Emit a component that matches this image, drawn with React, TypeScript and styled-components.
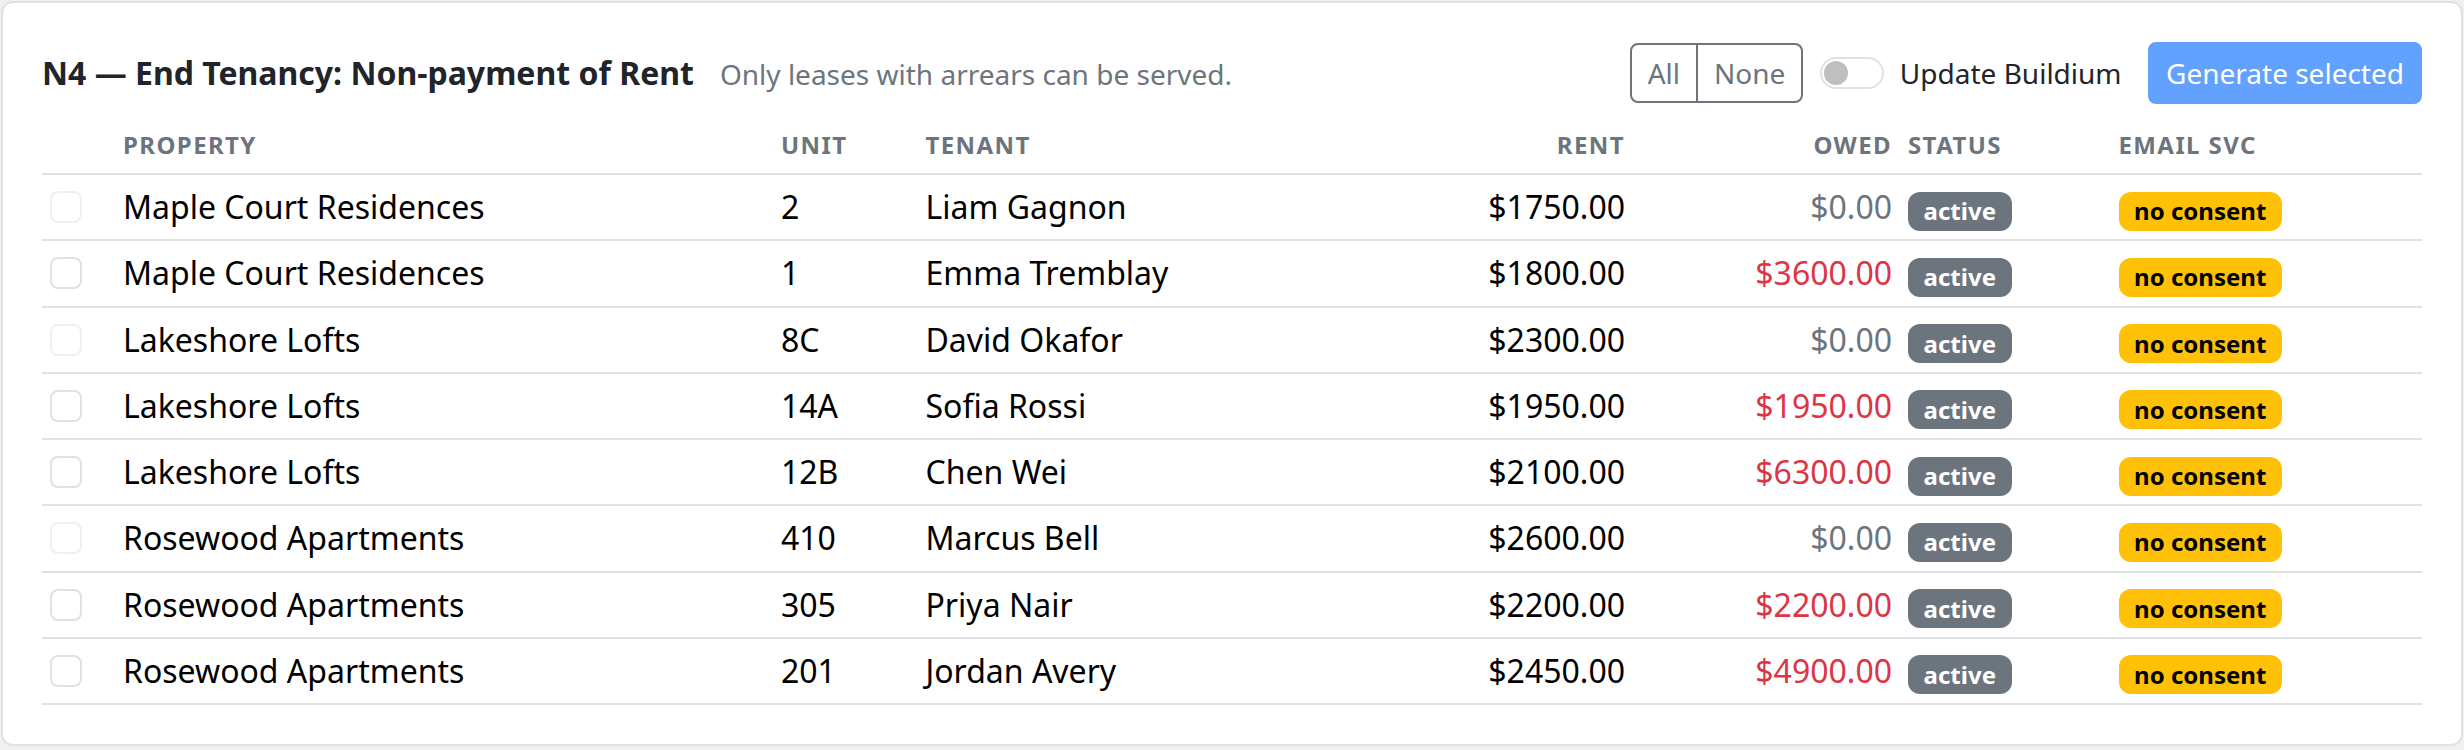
import React from "react";
import styled, { createGlobalStyle } from "styled-components";

const GlobalStyle = createGlobalStyle`
  html, body {
    margin: 0;
    padding: 0;
    background: #eef0f2;
    font-family: "Noto Sans", "Open Sans", sans-serif;
    color: #212529;
  }
  * { box-sizing: border-box; }
`;

const COLS = "73px 658px 144.5px 472.5px 243px 267px 210.5px 1fr";

const Page = styled.div`
  padding: 1px;
`;

const Card = styled.section`
  background: #ffffff;
  border: 2px solid #dee2e6;
  border-radius: 12px;
  padding: 39px;
`;

const Header = styled.div`
  display: flex;
  align-items: center;
  justify-content: space-between;
  height: 62px;
  margin-bottom: 17px;
`;

const TitleGroup = styled.div`
  display: flex;
  align-items: baseline;
`;

const Title = styled.h2`
  margin: 0;
  font-size: 32px;
  line-height: 48px;
  font-weight: 700;
  color: #212529;
`;

const Subtitle = styled.span`
  margin-left: 26px;
  font-size: 28px;
  line-height: 42px;
  color: #6c757d;
`;

const Controls = styled.div`
  display: flex;
  align-items: center;
`;

const BtnGroup = styled.div`
  display: flex;
  height: 60px;
  border: 2px solid #6c757d;
  border-radius: 8px;
  overflow: hidden;
`;

const GroupButton = styled.button<{ $divider?: boolean }>`
  font-family: inherit;
  font-size: 28px;
  line-height: 56px;
  padding: 0 16px;
  margin: 0;
  background: transparent;
  color: #6c757d;
  border: none;
  border-left: ${(p) => (p.$divider ? "2px solid #6c757d" : "none")};
  cursor: pointer;
`;

const Switch = styled.span`
  display: flex;
  align-items: center;
  width: 64px;
  height: 32px;
  margin-left: 17px;
  padding-left: 2px;
  border: 2px solid #dee2e6;
  border-radius: 16px;
  background: #ffffff;
`;

const Knob = styled.span`
  display: block;
  width: 24px;
  height: 24px;
  border-radius: 50%;
  background: #bfbfbf;
`;

const SwitchLabel = styled.label`
  margin-left: 15.5px;
  font-size: 28px;
  line-height: 42px;
  color: #212529;
`;

const PrimaryButton = styled.button`
  height: 62px;
  margin-left: 26.5px;
  padding: 0 16px;
  font-family: inherit;
  font-size: 28px;
  color: #ffffff;
  background: rgb(98, 161, 254);
  border: 2px solid rgb(98, 161, 254);
  border-radius: 8px;
  cursor: default;
`;

const Table = styled.div`
  display: flex;
  flex-direction: column;
`;

const HeadRow = styled.div`
  display: grid;
  grid-template-columns: ${COLS};
  align-items: end;
  height: 54px;
  border-bottom: 2px solid #dee2e6;
`;

const HeadCell = styled.div<{ $right?: boolean }>`
  padding: 0 8px 10px;
  font-size: 24px;
  line-height: 36px;
  font-weight: 700;
  letter-spacing: 1.4px;
  text-transform: uppercase;
  color: #6c757d;
  text-align: ${(p) => (p.$right ? "right" : "left")};
  white-space: nowrap;
`;

const BodyRow = styled.div`
  display: grid;
  grid-template-columns: ${COLS};
  border-bottom: 2px solid #dee2e6;
`;

const Cell = styled.div<{ $right?: boolean; $tone?: "muted" | "danger" }>`
  padding: 8px 8px 8.25px;
  font-size: 32px;
  line-height: 48px;
  white-space: nowrap;
  text-align: ${(p) => (p.$right ? "right" : "left")};
  color: ${(p) =>
    p.$tone === "muted" ? "#6c757d" : p.$tone === "danger" ? "#dc3545" : "#000000"};
`;

const Check = styled.input`
  appearance: none;
  -webkit-appearance: none;
  display: block;
  width: 32px;
  height: 32px;
  margin: 8px 0 0;
  border: 2px solid #dee2e6;
  border-radius: 8px;
  background: #ffffff;
  &:disabled {
    opacity: 0.5;
  }
`;

const Badge = styled.span<{ $kind: "secondary" | "warning" }>`
  display: inline-block;
  padding: 7.5px 15.6px;
  font-size: 24px;
  line-height: 24px;
  font-weight: 700;
  border-radius: 12px;
  vertical-align: -1px;
  background: ${(p) => (p.$kind === "secondary" ? "#6c757d" : "#ffc107")};
  color: ${(p) => (p.$kind === "secondary" ? "#ffffff" : "#000000")};
`;

type Lease = {
  property: string;
  unit: string;
  tenant: string;
  rent: number;
  owed: number;
};

const leases: Lease[] = [
  { property: "Maple Court Residences", unit: "2", tenant: "Liam Gagnon", rent: 1750, owed: 0 },
  { property: "Maple Court Residences", unit: "1", tenant: "Emma Tremblay", rent: 1800, owed: 3600 },
  { property: "Lakeshore Lofts", unit: "8C", tenant: "David Okafor", rent: 2300, owed: 0 },
  { property: "Lakeshore Lofts", unit: "14A", tenant: "Sofia Rossi", rent: 1950, owed: 1950 },
  { property: "Lakeshore Lofts", unit: "12B", tenant: "Chen Wei", rent: 2100, owed: 6300 },
  { property: "Rosewood Apartments", unit: "410", tenant: "Marcus Bell", rent: 2600, owed: 0 },
  { property: "Rosewood Apartments", unit: "305", tenant: "Priya Nair", rent: 2200, owed: 2200 },
  { property: "Rosewood Apartments", unit: "201", tenant: "Jordan Avery", rent: 2450, owed: 4900 },
];

const money = (n: number) => `$${n.toFixed(2)}`;

export default function App() {
  return (
    <Page>
      <GlobalStyle />
      <Card>
        <Header>
          <TitleGroup>
            <Title>N4 — End Tenancy: Non-payment of Rent</Title>
            <Subtitle>Only leases with arrears can be served.</Subtitle>
          </TitleGroup>
          <Controls>
            <BtnGroup>
              <GroupButton>All</GroupButton>
              <GroupButton $divider>None</GroupButton>
            </BtnGroup>
            <Switch role="switch" aria-checked="false">
              <Knob />
            </Switch>
            <SwitchLabel>Update Buildium</SwitchLabel>
            <PrimaryButton disabled>Generate selected</PrimaryButton>
          </Controls>
        </Header>
        <Table role="table">
          <HeadRow role="row">
            <HeadCell />
            <HeadCell>Property</HeadCell>
            <HeadCell>Unit</HeadCell>
            <HeadCell>Tenant</HeadCell>
            <HeadCell $right>Rent</HeadCell>
            <HeadCell $right>Owed</HeadCell>
            <HeadCell>Status</HeadCell>
            <HeadCell>Email svc</HeadCell>
          </HeadRow>
          {leases.map((l, i) => (
            <BodyRow role="row" key={i}>
              <Cell>
                <Check type="checkbox" disabled={l.owed === 0} />
              </Cell>
              <Cell>{l.property}</Cell>
              <Cell>{l.unit}</Cell>
              <Cell>{l.tenant}</Cell>
              <Cell $right>{money(l.rent)}</Cell>
              <Cell $right $tone={l.owed > 0 ? "danger" : "muted"}>
                {money(l.owed)}
              </Cell>
              <Cell>
                <Badge $kind="secondary">active</Badge>
              </Cell>
              <Cell>
                <Badge $kind="warning">no consent</Badge>
              </Cell>
            </BodyRow>
          ))}
        </Table>
      </Card>
    </Page>
  );
}
